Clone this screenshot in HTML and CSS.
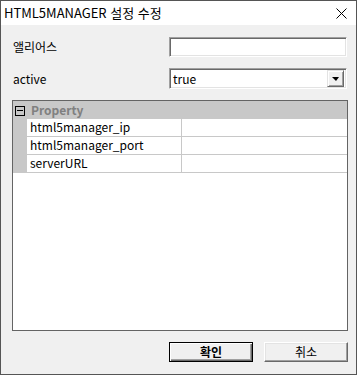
FILE: index.html
```html
<!DOCTYPE html>
<html lang="ko">
<head>
<meta charset="utf-8">
<link rel="stylesheet" href="styles.css">
</head>
<body>
<div class="window">
  <div class="titlebar">
    <span class="title">HTML5MANAGER 설정 수정</span>
    <svg class="close" width="11" height="11" viewBox="0 0 11 11"><path d="M0.5 0.5 L10.5 10.5 M10.5 0.5 L0.5 10.5" stroke="#000" stroke-width="1" fill="none"/></svg>
  </div>
  <div class="content">
    <div class="form-row row-alias">
      <span class="label">앨리어스</span>
      <div class="input"></div>
    </div>
    <div class="form-row row-active">
      <span class="label">active</span>
      <div class="select">
        <span class="select-value">true</span>
        <span class="select-btn"><span class="arrow"></span></span>
      </div>
    </div>
    <div class="grid">
      <div class="grid-header">
        <span class="toggle"><span class="minus"></span></span>
        <span class="header-text">Property</span>
      </div>
      <div class="grid-row"><span class="gutter"></span><span class="name">html5manager_ip</span><span class="value"></span></div>
      <div class="grid-row"><span class="gutter"></span><span class="name">html5manager_port</span><span class="value"></span></div>
      <div class="grid-row"><span class="gutter"></span><span class="name">serverURL</span><span class="value"></span></div>
      <div class="grid-fill"></div>
    </div>
    <div class="buttons">
      <button class="btn btn-default">확인</button>
      <button class="btn">취소</button>
    </div>
  </div>
</div>
</body>
</html>
```
FILE: styles.css
```css
* { box-sizing: border-box; }
html, body { margin: 0; padding: 0; }
body {
  width: 357px;
  height: 375px;
  font-family: "Noto Sans CJK KR", "Noto Sans", sans-serif;
  font-size: 12px;
  color: #000;
  background: #fff;
}
.window {
  width: 357px;
  height: 375px;
  border: 1px solid #555;
  display: flex;
  flex-direction: column;
  background: #f0f0f0;
}
.titlebar {
  height: 24px;
  background: #fff;
  display: flex;
  align-items: center;
  padding-left: 3px;
  padding-right: 9px;
  flex: none;
}
.title {
  font-size: 13px;
  line-height: 24px;
  flex: 1;
  color: #000;
}
.close { display: block; margin-top: 1px; }
.content {
  flex: 1;
  display: flex;
  flex-direction: column;
  padding: 12px 8px 12px 11px;
}
.form-row {
  display: flex;
  align-items: center;
  padding-left: 1px;
}
.row-alias { height: 20px; }
.row-active { height: 21px; margin-top: 11px; }
.label { flex: 1; line-height: 16px; }
.input, .select {
  width: 178px;
  margin-right: 1px;
  background: #fff;
  border-top: 1px solid #a0a0a0;
  border-left: 1px solid #a0a0a0;
  border-right: 1px solid #fff;
  border-bottom: 1px solid #fff;
  box-shadow: inset 1px 1px 0 #696969, inset -1px -1px 0 #e3e3e3;
}
.input { height: 20px; }
.select {
  height: 21px;
  display: flex;
  align-items: center;
  padding: 2px 2px 2px 3px;
}
.select-value { flex: 1; line-height: 16px; }
.select-btn {
  width: 17px;
  height: 17px;
  background: #f0f0f0;
  border-top: 1px solid #e3e3e3;
  border-left: 1px solid #e3e3e3;
  border-right: 1px solid #696969;
  border-bottom: 1px solid #696969;
  box-shadow: inset 1px 1px 0 #fff, inset -1px -1px 0 #a0a0a0;
  display: flex;
  align-items: center;
  justify-content: center;
}
.arrow {
  width: 0; height: 0;
  border-left: 4px solid transparent;
  border-right: 3px solid transparent;
  border-top: 4px solid #000;
}
.grid {
  margin-top: 11px;
  height: 231px;
  border: 1px solid #646464;
  background: #fff;
  display: flex;
  flex-direction: column;
}
.grid-header {
  height: 18px;
  background: #c8c8c8;
  display: flex;
  align-items: center;
  flex: none;
}
.toggle {
  width: 10px;
  height: 10px;
  border: 1px solid #000;
  margin-left: 2px;
  margin-top: 1px;
  display: flex;
  align-items: center;
  justify-content: center;
  background: #c8c8c8;
}
.minus { width: 6px; height: 1px; background: #000; }
.header-text {
  margin-left: 6px;
  font-weight: bold;
  color: #808080;
  font-size: 12px;
  line-height: 16px;
}
.grid-row {
  height: 18px;
  display: flex;
  border-bottom: 1px solid #c8c8c8;
  flex: none;
}
.gutter { width: 14px; background: #c8c8c8; flex: none; }
.name {
  width: 155px;
  border-right: 1px solid #c8c8c8;
  padding-left: 3px;
  line-height: 16px;
  flex: none;
}
.value { flex: 1; }
.grid-fill { flex: 1; }
.buttons {
  margin-top: 11px;
  display: flex;
  justify-content: flex-end;
  gap: 11px;
}
.btn {
  width: 84px;
  height: 20px;
  margin: 0;
  padding: 0;
  font-family: "Noto Sans CJK KR", "Noto Sans", sans-serif;
  font-size: 12px;
  color: #000;
  background: #f0f0f0;
  border-top: 1px solid #fff;
  border-left: 1px solid #fff;
  border-right: 1px solid #696969;
  border-bottom: 1px solid #696969;
  box-shadow: inset -1px -1px 0 #a0a0a0, inset 1px 1px 0 #e3e3e3;
  line-height: 16px;
}
.btn-default {
  border: 1px solid #000;
  box-shadow: inset 1px 1px 0 #fff, inset -1px -1px 0 #696969, inset -2px -2px 0 #a0a0a0;
  font-weight: bold;
}
```
